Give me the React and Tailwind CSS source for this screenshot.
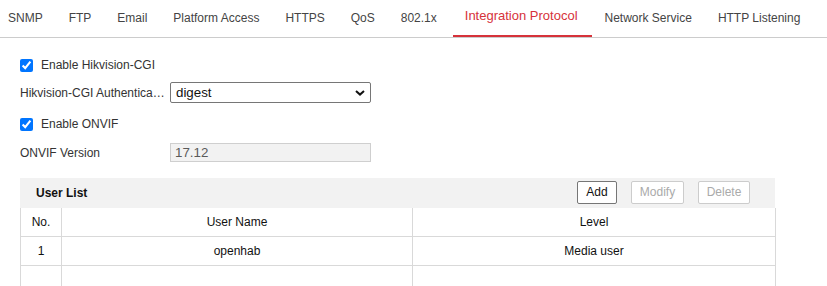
import React from "react";

const tabs = [
  "SNMP",
  "FTP",
  "Email",
  "Platform Access",
  "HTTPS",
  "QoS",
  "802.1x",
  "Integration Protocol",
  "Network Service",
  "HTTP Listening",
];

function Check({ label }) {
  return (
    <label className="flex items-center">
      <input
        type="checkbox"
        defaultChecked
        className="m-0 w-[13px] h-[13px] accent-[#0075ff]"
      />
      <span className="ml-[8px]">{label}</span>
    </label>
  );
}

export default function App() {
  return (
    <div
      className="w-[827px] h-[286px] overflow-hidden bg-white text-[12px] text-[#333]"
      style={{ fontFamily: '"Liberation Sans", Arial, sans-serif' }}
    >
      <div className="flex h-[38px] border-b border-[#cccccc] -ml-[5px]">
        {tabs.map((t) => {
          const active = t === "Integration Protocol";
          return (
            <div
              key={t}
              className={
                "h-[37px] flex items-center whitespace-nowrap border-b-2 " +
                (active
                  ? "ml-[3px] pl-[12px] pr-[14px] text-[13px] border-[#d6323a] text-[#d6323a]"
                  : "px-[13px] border-transparent text-[#444]")
              }
            >
              <span className={active ? "-mt-[3px]" : "mt-[0px]"}>{t}</span>
            </div>
          );
        })}
      </div>

      <div className="pl-[20px]">
        <div className="mt-[12px] h-[30px] flex items-center">
          <Check label="Enable Hikvision-CGI" />
        </div>
        <div className="h-[25px] flex items-center">
          <div className="w-[150px] truncate pr-[3px]">
            Hikvision-CGI Authentication
          </div>
          <div className="relative w-[201px] h-[21px]">
            <select
              defaultValue="digest"
              className="appearance-none w-full h-full border border-[#767676] rounded-[2px] bg-white pl-[5px] text-[13.33px] text-[#111] outline-none"
              style={{ fontFamily: '"Liberation Sans", Arial, sans-serif' }}
            >
              <option value="digest">digest</option>
              <option value="digest/basic">digest/basic</option>
            </select>
            <svg
              className="absolute right-[6px] top-[8px] pointer-events-none"
              width="10"
              height="6"
              viewBox="0 0 10 6"
            >
              <path
                d="M1 1 L5 4.6 L9 1"
                fill="none"
                stroke="#111"
                strokeWidth="2"
              />
            </svg>
          </div>
        </div>
        <div className="mt-[4px] h-[30px] flex items-center">
          <Check label="Enable ONVIF" />
        </div>
        <div className="mt-[4px] h-[19px] flex items-center">
          <div className="w-[150px]">ONVIF Version</div>
          <div className="w-[201px] h-[19px] border border-[#cfcfcf] bg-[#f2f2f2] pl-[4px] flex items-center text-[13.33px] text-[#5a5a5a]">
            17.12
          </div>
        </div>

        <div className="mt-[16px] w-[755px]">
          <div className="h-[30px] bg-[#f2f2f2] flex items-center pl-[16px] pr-[25px]">
            <span className="font-bold text-[#111]">User List</span>
            <div className="ml-auto flex gap-[14px]">
              <button className="h-[23px] w-[40px] border border-[#767676] rounded-[2px] bg-white text-[#111] mt-[-2px]">
                Add
              </button>
              <button className="h-[23px] w-[53px] border border-[#cccccc] rounded-[2px] bg-white text-[#aaaaaa] mt-[-2px]">
                Modify
              </button>
              <button className="h-[23px] w-[52px] border border-[#cccccc] rounded-[2px] bg-white text-[#aaaaaa] mt-[-2px]">
                Delete
              </button>
            </div>
          </div>
          <div className="grid grid-cols-[41px_351px_363px] border-l border-[#d9d9d9] text-[#111]">
            {[
              ["No.", "User Name", "Level"],
              ["1", "openhab", "Media user"],
              ["", "", ""],
              ["", "", ""],
            ].map((row, i) =>
              row.map((c, j) => (
                <div
                  key={i + "-" + j}
                  className="h-[29px] border-r border-b border-[#d9d9d9] flex items-center justify-center"
                >
                  {c}
                </div>
              ))
            )}
          </div>
        </div>
      </div>
    </div>
  );
}
